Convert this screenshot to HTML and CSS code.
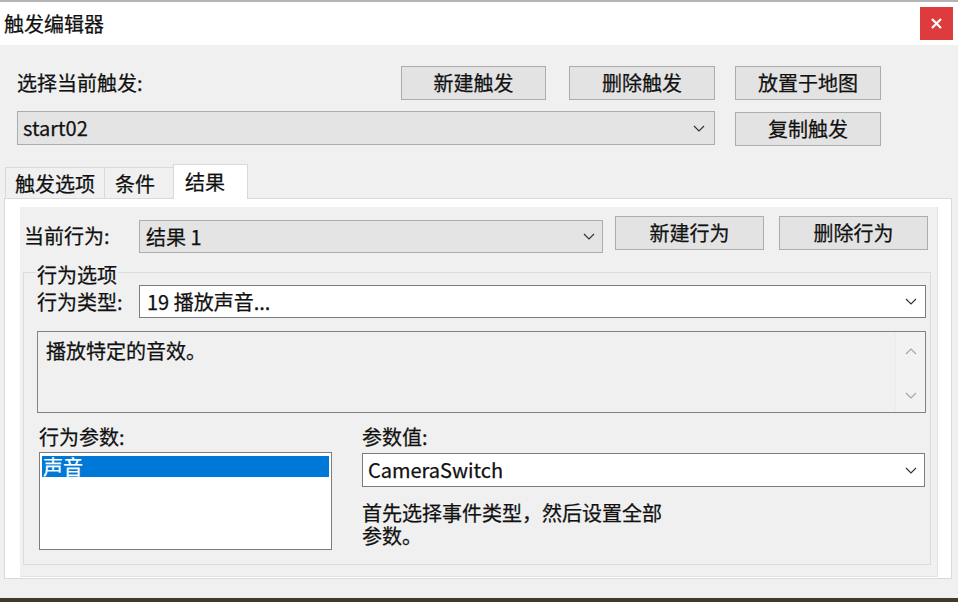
FILE: index.html
```html
<!DOCTYPE html>
<html lang="zh-CN">
<head>
<meta charset="utf-8">
<title>触发编辑器</title>
<link rel="stylesheet" href="styles.css">
</head>
<body>
<div class="window">
  <header class="titlebar">
    <span class="title">触发编辑器</span>
    <button class="close" aria-label="关闭">
      <svg width="11" height="11" viewBox="0 0 11 11"><path d="M1 1 L10 10 M10 1 L1 10" stroke="#fff" stroke-width="2.2" fill="none"/></svg>
    </button>
  </header>

  <section class="trigger-bar">
    <span class="label lbl-trigger">选择当前触发:</span>
    <button class="btn btn-new">新建触发</button>
    <button class="btn btn-del">删除触发</button>
    <button class="btn btn-place">放置于地图</button>
    <div class="combo combo-gray combo-trigger">
      <span>start02</span>
      <svg class="chev" width="12" height="7" viewBox="0 0 12 7"><polyline points="1,1 6,6 11,1" fill="none" stroke="#333" stroke-width="1.2"/></svg>
    </div>
    <button class="btn btn-copy">复制触发</button>
  </section>

  <nav class="tabs">
    <div class="tab tab-options">触发选项</div>
    <div class="tab tab-cond">条件</div>
    <div class="tab tab-result tab-active">结果</div>
  </nav>

  <div class="tab-frame">
    <div class="tab-page">
      <div class="action-row">
        <span class="label lbl-action">当前行为:</span>
        <div class="combo combo-gray combo-action">
          <span>结果 1</span>
          <svg class="chev" width="12" height="7" viewBox="0 0 12 7"><polyline points="1,1 6,6 11,1" fill="none" stroke="#333" stroke-width="1.2"/></svg>
        </div>
        <button class="btn btn-newact">新建行为</button>
        <button class="btn btn-delact">删除行为</button>
      </div>

      <div class="group">
        <div class="group-title">行为选项</div>
        <div class="type-row">
          <span class="label lbl-type">行为类型:</span>
          <div class="combo combo-white combo-type">
            <span>19 播放声音...</span>
            <svg class="chev" width="12" height="7" viewBox="0 0 12 7"><polyline points="1,1 6,6 11,1" fill="none" stroke="#333" stroke-width="1.2"/></svg>
          </div>
        </div>

        <div class="memo">
          <div class="memo-text">播放特定的音效。</div>
          <div class="memo-scroll">
            <svg width="12" height="7" viewBox="0 0 12 7"><polyline points="1,6 6,1 11,6" fill="none" stroke="#a6a6a6" stroke-width="1.2"/></svg>
            <svg width="12" height="7" viewBox="0 0 12 7"><polyline points="1,1 6,6 11,1" fill="none" stroke="#a6a6a6" stroke-width="1.2"/></svg>
          </div>
        </div>

        <div class="params">
          <div class="param-col param-left">
            <span class="label">行为参数:</span>
            <div class="listbox">
              <div class="list-item selected">声音</div>
            </div>
          </div>
          <div class="param-col param-right">
            <span class="label">参数值:</span>
            <div class="combo combo-white combo-value">
              <span>CameraSwitch</span>
              <svg class="chev" width="12" height="7" viewBox="0 0 12 7"><polyline points="1,1 6,6 11,1" fill="none" stroke="#333" stroke-width="1.2"/></svg>
            </div>
            <p class="hint">首先选择事件类型，然后设置全部参数。</p>
          </div>
        </div>
      </div>
    </div>
  </div>

  <div class="fill"></div>
  <div class="desktop-strip"></div>
</div>
</body>
</html>
```

FILE: styles.css
```css
* { box-sizing: border-box; }

html, body {
  margin: 0;
  padding: 0;
}

body {
  width: 958px;
  height: 602px;
  overflow: hidden;
  background: #f0f0f0;
  font-family: "Noto Sans CJK SC", "Microsoft YaHei", sans-serif;
  font-size: 20px;
  line-height: 22px;
  color: #111;
  -webkit-text-stroke: 0.25px #111;
}

.window {
  display: flex;
  flex-direction: column;
  height: 602px;
}

/* ---------- title bar ---------- */
.titlebar {
  flex: none;
  height: 45px;
  background: #fff;
  border-top: 2px solid #b4b4b4;
  display: flex;
  align-items: center;
  justify-content: space-between;
  padding: 0 5px 0 4px;
}

.close {
  width: 33px;
  height: 33px;
  padding: 0;
  border: none;
  background: #dd3b3d;
  display: flex;
  align-items: center;
  justify-content: center;
}

/* ---------- generic controls ---------- */
.label {
  white-space: nowrap;
}

.btn {
  font: inherit;
  color: inherit;
  padding: 0;
  height: 34px;
  background: #e3e3e3;
  border: 1px solid #adadad;
  display: flex;
  align-items: center;
  justify-content: center;
}

.combo {
  display: flex;
  align-items: center;
  justify-content: space-between;
  padding: 0 8px 0 5px;
  white-space: nowrap;
}

.combo-gray {
  background: #e4e4e4;
  border: 1px solid #adadad;
}

.combo-white {
  background: #fff;
  border: 1px solid #7c7c7c;
}

.chev { flex: none; }

/* ---------- trigger bar ---------- */
.trigger-bar {
  flex: none;
  display: grid;
  grid-template-columns: 384px 168px 146px 20px 146px;
  grid-template-rows: 34px 34px;
  row-gap: 11px;
  padding: 21px 0 0 17px;
}

.lbl-trigger {
  grid-row: 1;
  grid-column: 1;
  align-self: center;
}

.btn-new {
  grid-row: 1;
  grid-column: 2;
  width: 145px;
}

.btn-del {
  grid-row: 1;
  grid-column: 3;
}

.btn-place {
  grid-row: 1;
  grid-column: 5;
}

.combo-trigger {
  grid-row: 2;
  grid-column: 1 / 4;
  padding-right: 9px;
}

.btn-copy {
  grid-row: 2;
  grid-column: 5;
  margin-top: 1px;
}

/* ---------- tabs ---------- */
.tabs {
  flex: none;
  display: flex;
  align-items: flex-end;
  height: 34px;
  margin-top: 19px;
  padding-left: 5px;
}

.tab {
  height: 31px;
  padding-top: 5px;
  border: 1px solid #d9d9d9;
  border-bottom: none;
  background: #f0f0f0;
  white-space: nowrap;
}

.tab + .tab {
  margin-left: -1px;
}

.tab-options {
  width: 100px;
  padding-left: 9px;
}

.tab-cond {
  width: 70px;
  padding-left: 10px;
}

.tab-result {
  width: 75px;
  padding-left: 11px;
}

.tab-active {
  position: relative;
  z-index: 1;
  height: 35px;
  margin-bottom: -1px;
  background: #fff;
  padding-top: 6px;
}

/* ---------- tab frame ---------- */
.tab-frame {
  flex: none;
  width: 948px;
  height: 381px;
  margin-left: 4px;
  background: #fff;
  border: 1px solid #d9d9d9;
  padding: 8px 13px 1px 15px;
}

.tab-page {
  height: 100%;
  background: #f0f0f0;
  border-right: 1px solid #e2e2e2;
  border-bottom: 1px solid #e2e2e2;
  padding: 9px 0 0 3px;
}

.action-row {
  display: flex;
  align-items: flex-start;
  margin-left: 1px;
}

.lbl-action {
  width: 115px;
  margin-top: 9px;
}

.combo-action {
  width: 464px;
  height: 33px;
  margin-top: 4px;
  padding: 0 7px 0 6px;
}

.btn-newact {
  width: 149px;
  margin-left: 12px;
}

.btn-delact {
  width: 149px;
  margin-left: 15px;
}

/* ---------- group box ---------- */
.group {
  width: 908px;
  margin-top: 19px;
  border: 1px solid #dcdcdc;
  padding: 0 4px 14px 13px;
}

.group-title {
  width: fit-content;
  margin: -8px 0 0 -1px;
  padding: 0 1px;
  line-height: 20px;
  background: #f0f0f0;
}

.type-row {
  display: flex;
}

.lbl-type {
  width: 102px;
  align-self: center;
}

.combo-type {
  flex: 1;
  height: 33px;
  padding: 0 8px 0 7px;
}

.memo {
  display: flex;
  height: 82px;
  margin-top: 13px;
  border: 1px solid #828282;
  background: #f0f0f0;
}

.memo-text {
  flex: 1;
  padding: 8px 0 0 8px;
}

.memo-scroll {
  width: 30px;
  flex: none;
  display: flex;
  flex-direction: column;
  align-items: center;
  justify-content: space-between;
  padding: 16px 0 13px;
  background: #f2f2f2;
  border-left: 1px solid #ebebeb;
}

.params {
  display: grid;
  grid-template-columns: 295px 563px;
  column-gap: 30px;
  margin-top: 13px;
}

.param-left {
  padding-left: 2px;
}

.param-col {
  display: flex;
  flex-direction: column;
}

.listbox {
  height: 98px;
  margin-top: 4px;
  background: #fff;
  border: 1px solid #7c7c7c;
  padding: 3px 2px;
}

.list-item {
  height: 21px;
  line-height: 21px;
  padding-left: 1px;
}

.list-item.selected {
  background: #0078d7;
  color: #fff;
  -webkit-text-stroke: 0.25px #fff;
}

.combo-value {
  height: 34px;
  margin-top: 5px;
  padding: 0 7px 0 5px;
}

.hint {
  width: 310px;
  margin: 14px 0 0;
  line-height: 23px;
}

/* ---------- bottom ---------- */
.fill {
  flex: 1;
}

.desktop-strip {
  flex: none;
  height: 4px;
  background: #3f3b2b;
}
```
